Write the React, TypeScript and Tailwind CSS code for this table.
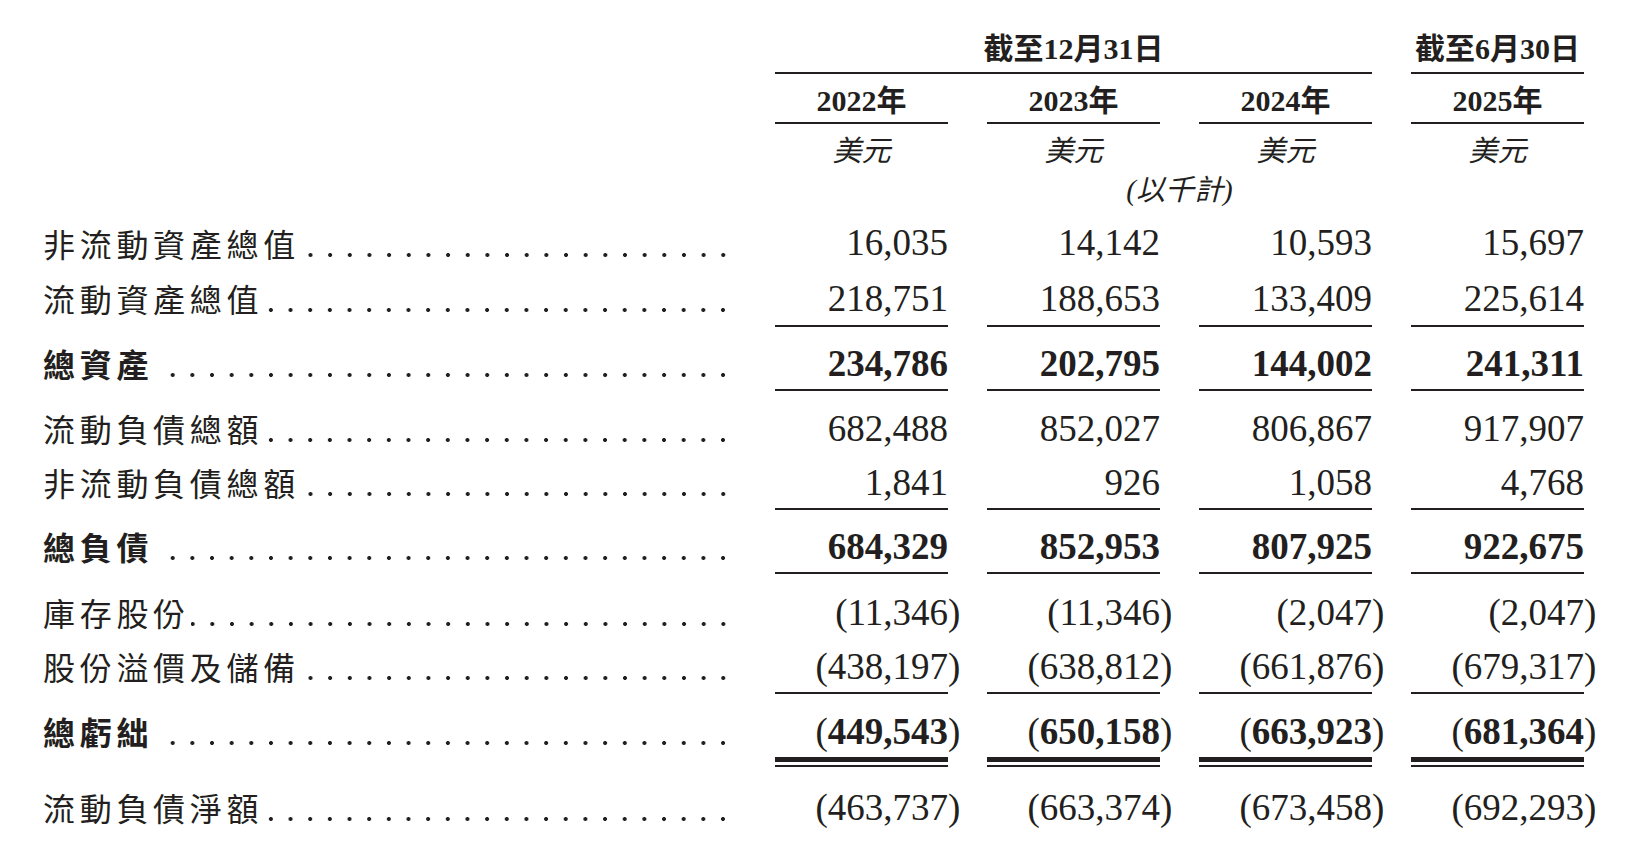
import React from "react";

type Row = {
  label: string;
  bold?: boolean;
  vals: string[];
  rowCls: string;
  line?: "single" | "double";
};

const rows: Row[] = [
  { label: "非流動資產總值", vals: ["16,035", "14,142", "10,593", "15,697"], rowCls: "h-[57px]" },
  { label: "流動資產總值", vals: ["218,751", "188,653", "133,409", "225,614"], rowCls: "h-[56px]", line: "single" },
  { label: "總資產", bold: true, vals: ["234,786", "202,795", "144,002", "241,311"], rowCls: "mt-[10px] h-[54px]", line: "single" },
  { label: "流動負債總額", vals: ["682,488", "852,027", "806,867", "917,907"], rowCls: "mt-[9px] h-[56px]" },
  { label: "非流動負債總額", vals: ["1,841", "926", "1,058", "4,768"], rowCls: "h-[54px]", line: "single" },
  { label: "總負債", bold: true, vals: ["684,329", "852,953", "807,925", "922,675"], rowCls: "mt-[10px] h-[54px]", line: "single" },
  { label: "庫存股份", vals: ["(11,346)", "(11,346)", "(2,047)", "(2,047)"], rowCls: "mt-[10px] h-[56px]" },
  { label: "股份溢價及儲備", vals: ["(438,197)", "(638,812)", "(661,876)", "(679,317)"], rowCls: "h-[54px]", line: "single" },
  { label: "總虧絀", bold: true, vals: ["(449,543)", "(650,158)", "(663,923)", "(681,364)"], rowCls: "mt-[11px] h-[62px]", line: "double" },
  { label: "流動負債淨額", vals: ["(463,737)", "(663,374)", "(673,458)", "(692,293)"], rowCls: "mt-[12px] h-[56px]" },
];

function Num({ v, bold }: { v: string; bold?: boolean }) {
  const neg = v.startsWith("(");
  const core = neg ? v.slice(1, -1) : v;
  return (
    <span className="whitespace-nowrap">
      {neg && <span className="font-normal">(</span>}
      <span className={bold ? "font-bold" : "font-normal"}>{core}</span>
      {neg && <span className="font-normal -mr-[0.333em]">)</span>}
    </span>
  );
}

const dots =
  "flex-1 h-[6px] translate-y-[12px] bg-[radial-gradient(circle,#231f20_1.6px,transparent_2.3px)] bg-[length:19.66px_6px] bg-repeat-x bg-right";

export default function App() {
  return (
    <div className="w-[1632px] h-[860px] bg-white text-[#231f20] overflow-hidden pl-[43px]">
      {/* header row 1 */}
      <div className="flex font-['Liberation_Serif','Noto_Sans_CJK_TC',serif] font-bold text-[30px]">
        <div className="w-[732px]" />
        <div className="w-[597px] h-[74px] pt-[29px] leading-[40px] text-center border-b-2 border-[#231f20]">
          截至12月31日
        </div>
        <div className="w-[39px]" />
        <div className="w-[173px] h-[74px] pt-[29px] leading-[40px] text-center border-b-2 border-[#231f20]">
          截至6月30日
        </div>
      </div>
      {/* header row 2 years */}
      <div className="flex gap-[39px] pl-[732px] font-['Liberation_Serif','Noto_Sans_CJK_TC',serif] font-bold text-[30px]">
        {["2022年", "2023年", "2024年", "2025年"].map((y) => (
          <div key={y} className="w-[173px] h-[50px] pt-[6px] leading-[42px] text-center border-b-2 border-[#231f20]">
            {y}
          </div>
        ))}
      </div>
      {/* header row 3 currency */}
      <div className="flex gap-[39px] pl-[732px] font-['Liberation_Serif','Noto_Sans_CJK_TC',serif] italic text-[29px]">
        {[0, 1, 2, 3].map((i) => (
          <div key={i} className="w-[173px] h-[55px] leading-[55px] text-center">
            美元
          </div>
        ))}
      </div>
      <div className="flex pl-[732px] font-['Liberation_Serif','Noto_Sans_CJK_TC',serif] italic text-[29px]">
        <div className="w-[809px] h-[23px] leading-[23px] text-center">(以千計)</div>
      </div>

      {/* data rows */}
      <div className="mt-[12px] flex flex-col">
        {rows.map((r) => (
          <div key={r.label} className={"flex " + r.rowCls}>
            <div
              className={
                "w-[690px] mr-[42px] flex items-center font-['Noto_Sans_CJK_TC',sans-serif] text-[32px] tracking-[4.7px] leading-none " +
                (r.bold ? "font-bold " : "font-normal ") +
                (r.line === "double" ? "pb-[10px]" : r.line === "single" ? "pb-[2px]" : "")
              }
            >
              <span className={r.bold ? "mr-[14px]" : "mr-[1px]"}>{r.label}</span>
              <span className={dots} />
            </div>
            <div className="flex gap-[39px]">
              {r.vals.map((v, i) =>
                r.line === "double" ? (
                  <div key={i} className="w-[173px] flex flex-col">
                    <div className="h-[52px] flex items-center justify-end font-['Liberation_Serif',serif] text-[37px] leading-none">
                      <Num v={v} bold={r.bold} />
                    </div>
                    <div className="h-[5px] bg-[#231f20]" />
                    <div className="h-[3px]" />
                    <div className="h-[2px] bg-[#231f20]" />
                  </div>
                ) : (
                  <div
                    key={i}
                    className={
                      "w-[173px] flex items-center justify-end font-['Liberation_Serif',serif] text-[37px] leading-none " +
                      (r.line === "single" ? "border-b-2 border-[#231f20]" : "")
                    }
                  >
                    <Num v={v} bold={r.bold} />
                  </div>
                )
              )}
            </div>
          </div>
        ))}
      </div>
    </div>
  );
}
